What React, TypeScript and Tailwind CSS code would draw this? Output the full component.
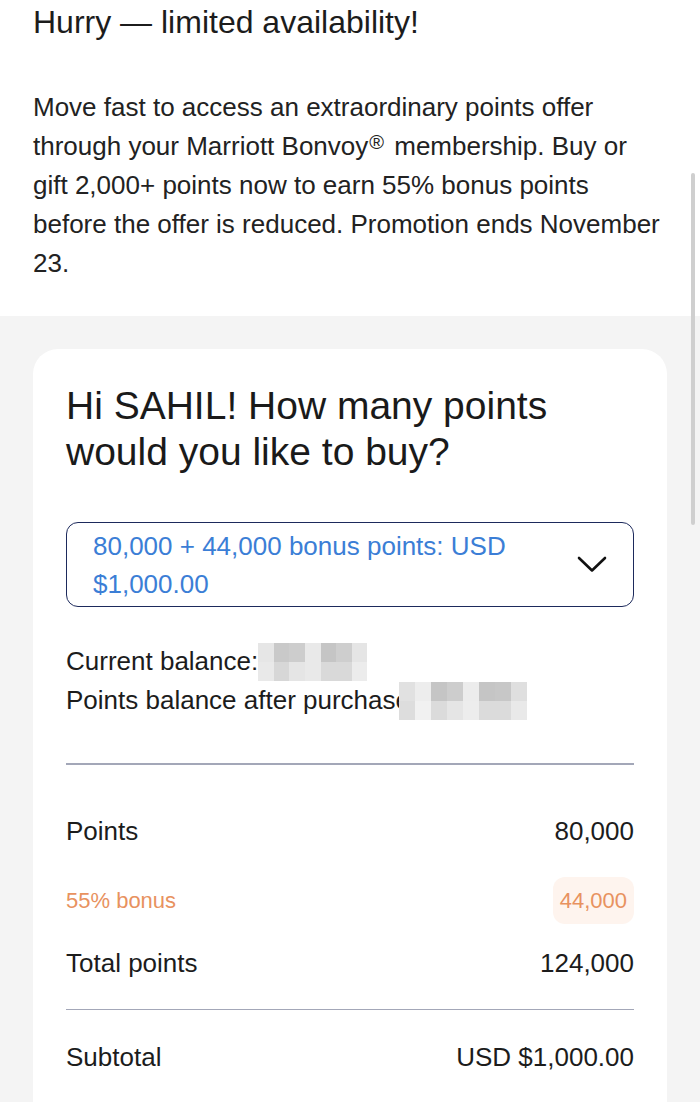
const font = { fontFamily: '"Liberation Sans", Arial, Helvetica, sans-serif' }

// pixelated "blur" over the balances
const balanceCells = [
  ['#e6e6e6', '#c9c9c9', '#cdcdcd', '#e9e9e9', '#c5c5c5', '#cecece', '#e5e5e5'],
  ['#e9e9e9', '#d7d7d7', '#e5e5e5', '#e9e9e9', '#d9d9d9', '#d9d9d9', '#ececec']
]
const afterCells = [
  ['#e1e1e1', '#ededed', '#c5c5c5', '#cdcdcd', '#ececec', '#c5c5c5', '#c7c7c7', '#dfdfdf'],
  ['#dddddd', '#f1f1f1', '#dbdbdb', '#e5e5e5', '#ededed', '#dbdbdb', '#dbdbdb', '#e9e9e9']
]

function Pixels({ rows, cell }: { rows: string[][]; cell: string }) {
  return (
    <span className="inline-flex shrink-0 flex-col">
      {rows.map((r, i) => (
        <span key={i} className="flex">
          {r.map((c, j) => (
            <span key={j} className={cell} style={{ backgroundColor: c }} />
          ))}
        </span>
      ))}
    </span>
  )
}

export default function App() {
  return (
    <div className="relative h-[1102px] w-[700px] overflow-hidden bg-white text-[#1c1c1c]" style={font}>
      <section className="bg-white px-[33px] pb-[33px] pt-[2px]">
        <h1 className="text-[32px] leading-[40px]">Hurry — limited availability!</h1>
        <p className="mt-[46px] max-w-[630px] text-[26px] leading-[39px] text-[#222]">
          Move fast to access an extraordinary points offer through your Marriott Bonvoy
          <sup className="relative top-[-6px] ml-[1px] mr-[3px] text-[20px] leading-none">®</sup> membership. Buy or
          gift 2,000+ points now to earn 55% bonus points before the offer is reduced. Promotion ends
          November 23.
        </p>
      </section>

      <section className="bg-[#f4f4f4] px-[33px] pt-[33px]">
        <div className="rounded-t-[25px] bg-white px-[33px] pb-[60px] pt-[34px]">
          <h2 className="text-[39px] leading-[46px] text-[#1a1a1a]">
            Hi SAHIL! How many points would you like to buy?
          </h2>

          <button className="mt-[47px] flex h-[85px] w-full items-center justify-between rounded-[12px] border-[1.5px] border-[#1d2a5c] pl-[26px] pr-[26px] text-left">
            <span className="w-[470px] text-[26px] leading-[38px] text-[#3b7ed6]">
              80,000 + 44,000 bonus points: USD $1,000.00
            </span>
            <svg width="30" height="17" viewBox="0 0 30 17" fill="none" className="shrink-0">
              <path d="M2 2 L15 14.5 L28 2" stroke="#111" strokeWidth="2.6" strokeLinecap="round" strokeLinejoin="round" />
            </svg>
          </button>

          <div className="mt-[35px] text-[26px] leading-[39px]">
            <div className="flex h-[39px] items-center">
              <span>Current balance:</span>
              <Pixels rows={balanceCells} cell="h-[19px] w-[15.6px]" />
            </div>
            <div className="flex h-[39px] items-center">
              <span className="whitespace-nowrap">Points balance after purchase:</span>
              <span className="-ml-[18px] flex">
                <Pixels rows={afterCells} cell="h-[19px] w-[16px]" />
              </span>
            </div>
          </div>

          <div className="mt-[43px] h-[1.5px] bg-[#a3a7b8]" />

          <div className="mt-[47px] flex items-center justify-between text-[26px] leading-[39px]">
            <span>Points</span>
            <span>80,000</span>
          </div>
          <div className="mt-[26px] flex h-[47px] items-center justify-between text-[22px] text-[#e8925f]">
            <span>55% bonus</span>
            <span className="flex h-[47px] items-center rounded-[12px] bg-[#fef4ee] px-[7px]">44,000</span>
          </div>
          <div className="mt-[20px] flex items-center justify-between text-[26px] leading-[39px]">
            <span>Total points</span>
            <span>124,000</span>
          </div>

          <div className="mt-[26px] h-[1.5px] bg-[#a3a7b8]" />

          <div className="mt-[28px] flex items-center justify-between text-[26px] leading-[39px]">
            <span>Subtotal</span>
            <span>USD $1,000.00</span>
          </div>
        </div>
      </section>

      {/* overlay scrollbar */}
      <div className="absolute right-[5px] top-[173px] h-[352px] w-[4px] rounded-full bg-[#cfcfcf]" />
    </div>
  )
}
